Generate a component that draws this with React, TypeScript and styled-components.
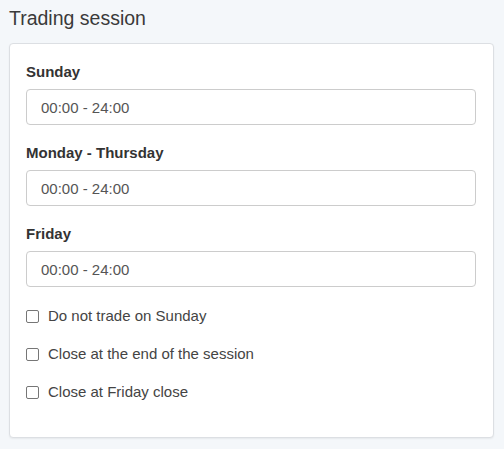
import React from 'react';
import styled, { createGlobalStyle } from 'styled-components';

const GlobalStyle = createGlobalStyle`
  html, body {
    margin: 0;
    padding: 0;
    background: #f4f7fa;
    font-family: "Liberation Sans", Arial, sans-serif;
  }
`;

const Page = styled.div`
  padding: 6px 10px 12px 9px;
  width: 504px;
  box-sizing: border-box;
`;

const Title = styled.h2`
  margin: 0 0 13px 0;
  font-size: 19.5px;
  font-weight: normal;
  color: #3a3a3a;
  line-height: 24px;
`;

const Card = styled.div`
  background: #fff;
  border: 1px solid #dcdfe3;
  border-radius: 4px;
  box-shadow: 0 1px 2px rgba(0, 0, 0, 0.06);
  padding: 19px 17px 36px 16px;
  display: flex;
  flex-direction: column;
`;

const Field = styled.div`
  display: flex;
  flex-direction: column;
  margin-bottom: 19px;
`;

const Label = styled.label`
  font-size: 15px;
  font-weight: bold;
  color: #333;
  line-height: 18px;
  margin-bottom: 8px;
`;

const Input = styled.input`
  height: 36px;
  flex: 0 0 36px;
  box-sizing: border-box;
  border: 1px solid #ccc;
  border-radius: 4px;
  padding: 0 14px;
  font-family: inherit;
  font-size: 15px;
  color: #555;
  outline: none;
`;

const Options = styled.div`
  display: flex;
  flex-direction: column;
  gap: 20px;
  margin-top: 1px;
`;

const Option = styled.label`
  display: flex;
  align-items: center;
  gap: 9px;
  font-size: 15px;
  color: #444;
  line-height: 18px;
`;

const Box = styled.input`
  appearance: none;
  width: 13px;
  height: 13px;
  margin: 0;
  border: 1px solid #767676;
  border-radius: 2px;
  background: #fff;
`;

const days = ['Sunday', 'Monday - Thursday', 'Friday'];
const options = [
  'Do not trade on Sunday',
  'Close at the end of the session',
  'Close at Friday close',
];

export default function App() {
  return (
    <Page>
      <GlobalStyle />
      <Title>Trading session</Title>
      <Card>
        {days.map((d) => (
          <Field key={d}>
            <Label>{d}</Label>
            <Input defaultValue="00:00 - 24:00" />
          </Field>
        ))}
        <Options>
          {options.map((o) => (
            <Option key={o}>
              <Box type="checkbox" />
              {o}
            </Option>
          ))}
        </Options>
      </Card>
    </Page>
  );
}
